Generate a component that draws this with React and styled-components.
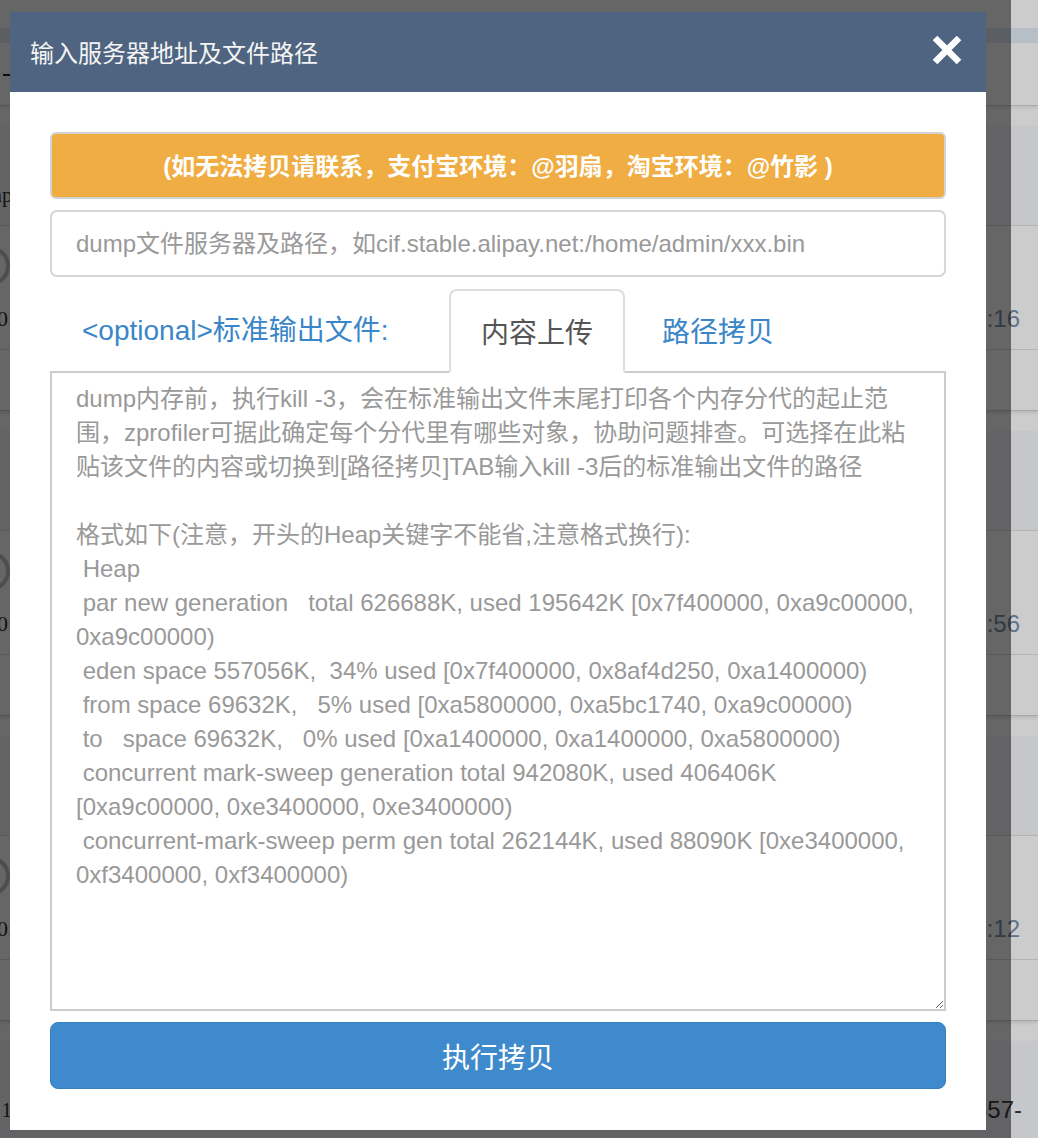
import React from "react";
import styled, { createGlobalStyle } from "styled-components";

const Global = createGlobalStyle`
  html, body { margin: 0; padding: 0; overflow: hidden; background: #fff; }
  body { font-family: "Liberation Serif", serif; }
  * { box-sizing: border-box; }
`;

/* ---------- background page (under the dimmer) ---------- */
const Page = styled.div`
  font-family: "Liberation Serif", serif;
  color: #333;
  width: 100%;
`;
const PageHead = styled.div`
  height: 106px;
  padding-top: 28px;
  border-bottom: 1px solid #d6d6d6;
  box-shadow: 0 2px 3px rgba(0, 0, 0, 0.08);
`;
const NavBand = styled.div`
  height: 15px;
  background: #e4eefa;
`;
const Dash = styled.div`
  margin: 31px 0 0 3px;
  width: 8px;
  height: 2px;
  background: #222;
`;
const Card = styled.div`
  margin-top: 20px;
  background: #fff;
  border-bottom: 1px solid #d2d2d2;
  box-shadow: 0 2px 3px rgba(0, 0, 0, 0.1);
`;
const CardBand = styled.div`
  height: 100px;
  background: #f8f9fd;
  border-bottom: 1px solid #e0e0e0;
  display: flex;
  align-items: flex-end;
  justify-content: space-between;
  padding-bottom: 16px;
`;
const EdgeLabel = styled.div`
  margin-left: -40px;
  width: 52px;
  text-align: right;
  font-size: 21px;
  line-height: 28px;
  white-space: nowrap;
`;
const BandRight = styled.div`
  font-family: "Liberation Sans", sans-serif;
  font-size: 24px;
  line-height: 28px;
  padding-right: 16px;
  color: #3a3a3a;
  white-space: nowrap;
`;
const TimeRow = styled.div`
  height: 124px;
  border-bottom: 1px solid #e0e0e0;
  display: flex;
  justify-content: space-between;
  align-items: flex-start;
`;
const AvatarCol = styled.div`
  margin-left: -30px;
  width: 44px;
  padding-top: 20px;
  display: flex;
  flex-direction: column;
`;
const Avatar = styled.div`
  width: 40px;
  height: 40px;
  border-radius: 50%;
  border: 4px solid #bfc3ca;
`;
const AvatarText = styled.div`
  margin-top: 19px;
  text-align: right;
  font-size: 22px;
  line-height: 28px;
  white-space: nowrap;
`;
const TimeText = styled.div`
  padding-top: 78px;
  padding-right: 18px;
  font-family: "Liberation Sans", sans-serif;
  font-size: 24px;
  line-height: 30px;
  color: #7b90ae;
  white-space: nowrap;
`;
const CardRow = styled.div`
  height: 60px;
`;

/* ---------- overlays ---------- */
const Dim = styled.div`
  position: fixed;
  inset: 0;
  background: rgba(0, 0, 0, 0.2);
`;
const Backdrop = styled.div`
  position: fixed;
  top: 0;
  left: 0;
  bottom: 0;
  width: 1011px;
  background: rgba(0, 0, 0, 0.5);
  padding: 12px 0 0 10px;
`;

/* ---------- modal ---------- */
const Modal = styled.div`
  width: 976px;
  background: #fff;
  display: flex;
  flex-direction: column;
  font-family: "Liberation Sans", "Noto Sans CJK SC", sans-serif;
`;
const ModalHeader = styled.div`
  height: 80px;
  background: #4e6480;
  display: flex;
  align-items: center;
  justify-content: space-between;
  padding: 0 24px 0 20px;
`;
const Title = styled.h4`
  margin: 0;
  font-family: "Noto Sans CJK SC", sans-serif;
  font-weight: 400;
  font-size: 24px;
  line-height: 34px;
  color: #f4f4f4;
`;
const CloseButton = styled.button`
  border: 0;
  background: none;
  padding: 0;
  width: 30px;
  height: 30px;
  display: flex;
  cursor: pointer;
  margin-top: -4px;
`;
const ModalBody = styled.div`
  padding: 40px 40px 41px;
  display: flex;
  flex-direction: column;
`;
const Alert = styled.div`
  height: 67px;
  border: 2px solid #d2d2d2;
  border-radius: 6px;
  background: #f0ad43;
  color: #fff;
  font-family: "Liberation Sans", "Noto Sans CJK SC", sans-serif;
  font-weight: 700;
  font-size: 24px;
  padding-bottom: 2px;
  display: flex;
  align-items: center;
  justify-content: center;
`;
const TextInput = styled.input`
  margin-top: 11px;
  height: 67px;
  width: 100%;
  border: 2px solid #d6d6d6;
  border-radius: 7px;
  padding: 0 24px;
  font-family: "Liberation Sans", "Noto Sans CJK SC", sans-serif;
  font-size: 24px;
  color: #555;
  outline: none;
  &::placeholder { color: #999; opacity: 1; }
`;
const Tabs = styled.div`
  margin-top: 12px;
  display: flex;
  align-items: flex-end;
  height: 82px;
`;
const TabLabel = styled.div`
  flex: 0 0 399px;
  padding: 20px 0 20px 32px;
  font-size: 28px;
  line-height: 40px;
  color: #3a86c8;
  white-space: nowrap;
`;
const Tab = styled.div`
  position: relative;
  z-index: 1;
  height: ${(p) => (p.$active ? "84px" : "82px")};
  margin-bottom: ${(p) => (p.$active ? "-2px" : "0")};
  padding: 20px ${(p) => (p.$active ? "30px" : "35px")};
  border: 2px solid ${(p) => (p.$active ? "#dddddd" : "transparent")};
  border-bottom-color: ${(p) => (p.$active ? "#fff" : "transparent")};
  border-radius: 8px 8px 0 0;
  background: ${(p) => (p.$active ? "#fff" : "transparent")};
  font-family: "Noto Sans CJK SC", sans-serif;
  font-size: 28px;
  line-height: 40px;
  color: ${(p) => (p.$active ? "#555" : "#3a86c8")};
  white-space: nowrap;
  display: flex;
  align-items: center;
`;
const TextArea = styled.textarea`
  display: block;
  width: 100%;
  height: 640px;
  border: 2px solid #cccccc;
  border-radius: 0;
  padding: 9px 10px 10px 24px;
  font-family: "Liberation Sans", "Noto Sans CJK SC", sans-serif;
  font-size: 24px;
  line-height: 34px;
  color: #555;
  outline: none;
  resize: vertical;
  &::placeholder { color: #999; opacity: 1; }
`;
const SubmitButton = styled.button`
  margin-top: 11px;
  height: 67px;
  width: 100%;
  border: 1px solid #3580c1;
  border-radius: 8px;
  background: #3f8acc;
  color: #fff;
  font-family: "Noto Sans CJK SC", sans-serif;
  font-size: 28px;
  cursor: pointer;
`;

const placeholderText = [
  "dump内存前，执行kill -3，会在标准输出文件末尾打印各个内存分代的起止范",
  "围，zprofiler可据此确定每个分代里有哪些对象，协助问题排查。可选择在此粘",
  "贴该文件的内容或切换到[路径拷贝]TAB输入kill -3后的标准输出文件的路径",
  "",
  "格式如下(注意，开头的Heap关键字不能省,注意格式换行):",
  " Heap",
  " par new generation   total 626688K, used 195642K [0x7f400000, 0xa9c00000, ",
  "0xa9c00000)",
  " eden space 557056K,  34% used [0x7f400000, 0x8af4d250, 0xa1400000)",
  " from space 69632K,   5% used [0xa5800000, 0xa5bc1740, 0xa9c00000)",
  " to   space 69632K,   0% used [0xa1400000, 0xa1400000, 0xa5800000)",
  " concurrent mark-sweep generation total 942080K, used 406406K",
  "[0xa9c00000, 0xe3400000, 0xe3400000)",
  " concurrent-mark-sweep perm gen total 262144K, used 88090K [0xe3400000, ",
  "0xf3400000, 0xf3400000)",
].join("\n");

const cards = [
  { left: "Dump]", time: "2017-01-10 10:15:16" },
  { left: "", time: "2017-01-09 17:32:56" },
  { left: "", time: "2017-01-09 11:08:12" },
  { left: "1", right: "2017-01-06 1557-" },
];

export default function App() {
  return (
    <>
      <Global />
      <Page>
        <PageHead>
          <NavBand />
          <Dash />
        </PageHead>
        {cards.map((c, i) => (
          <Card key={i}>
            <CardBand>
              <EdgeLabel>{c.left}</EdgeLabel>
              {c.right && <BandRight>{c.right}</BandRight>}
            </CardBand>
            {c.time && (
              <TimeRow>
                <AvatarCol>
                  <Avatar />
                  <AvatarText>10:</AvatarText>
                </AvatarCol>
                <TimeText>{c.time}</TimeText>
              </TimeRow>
            )}
            {c.time && <CardRow />}
          </Card>
        ))}
      </Page>
      <Dim />
      <Backdrop>
        <Modal>
          <ModalHeader>
            <Title>输入服务器地址及文件路径</Title>
            <CloseButton aria-label="close">
              <svg width="30" height="30" viewBox="0 0 30 30">
                <path d="M3 3 L27 27 M27 3 L3 27" stroke="#fff" strokeWidth="6.5" fill="none" />
              </svg>
            </CloseButton>
          </ModalHeader>
          <ModalBody>
            <Alert>(如无法拷贝请联系，支付宝环境：@羽扇，淘宝环境：@竹影 )</Alert>
            <TextInput placeholder="dump文件服务器及路径，如cif.stable.alipay.net:/home/admin/xxx.bin" />
            <Tabs>
              <TabLabel>&lt;optional&gt;标准输出文件:</TabLabel>
              <Tab $active>内容上传</Tab>
              <Tab>路径拷贝</Tab>
            </Tabs>
            <TextArea placeholder={placeholderText} />
            <SubmitButton>执行拷贝</SubmitButton>
          </ModalBody>
        </Modal>
      </Backdrop>
    </>
  );
}
